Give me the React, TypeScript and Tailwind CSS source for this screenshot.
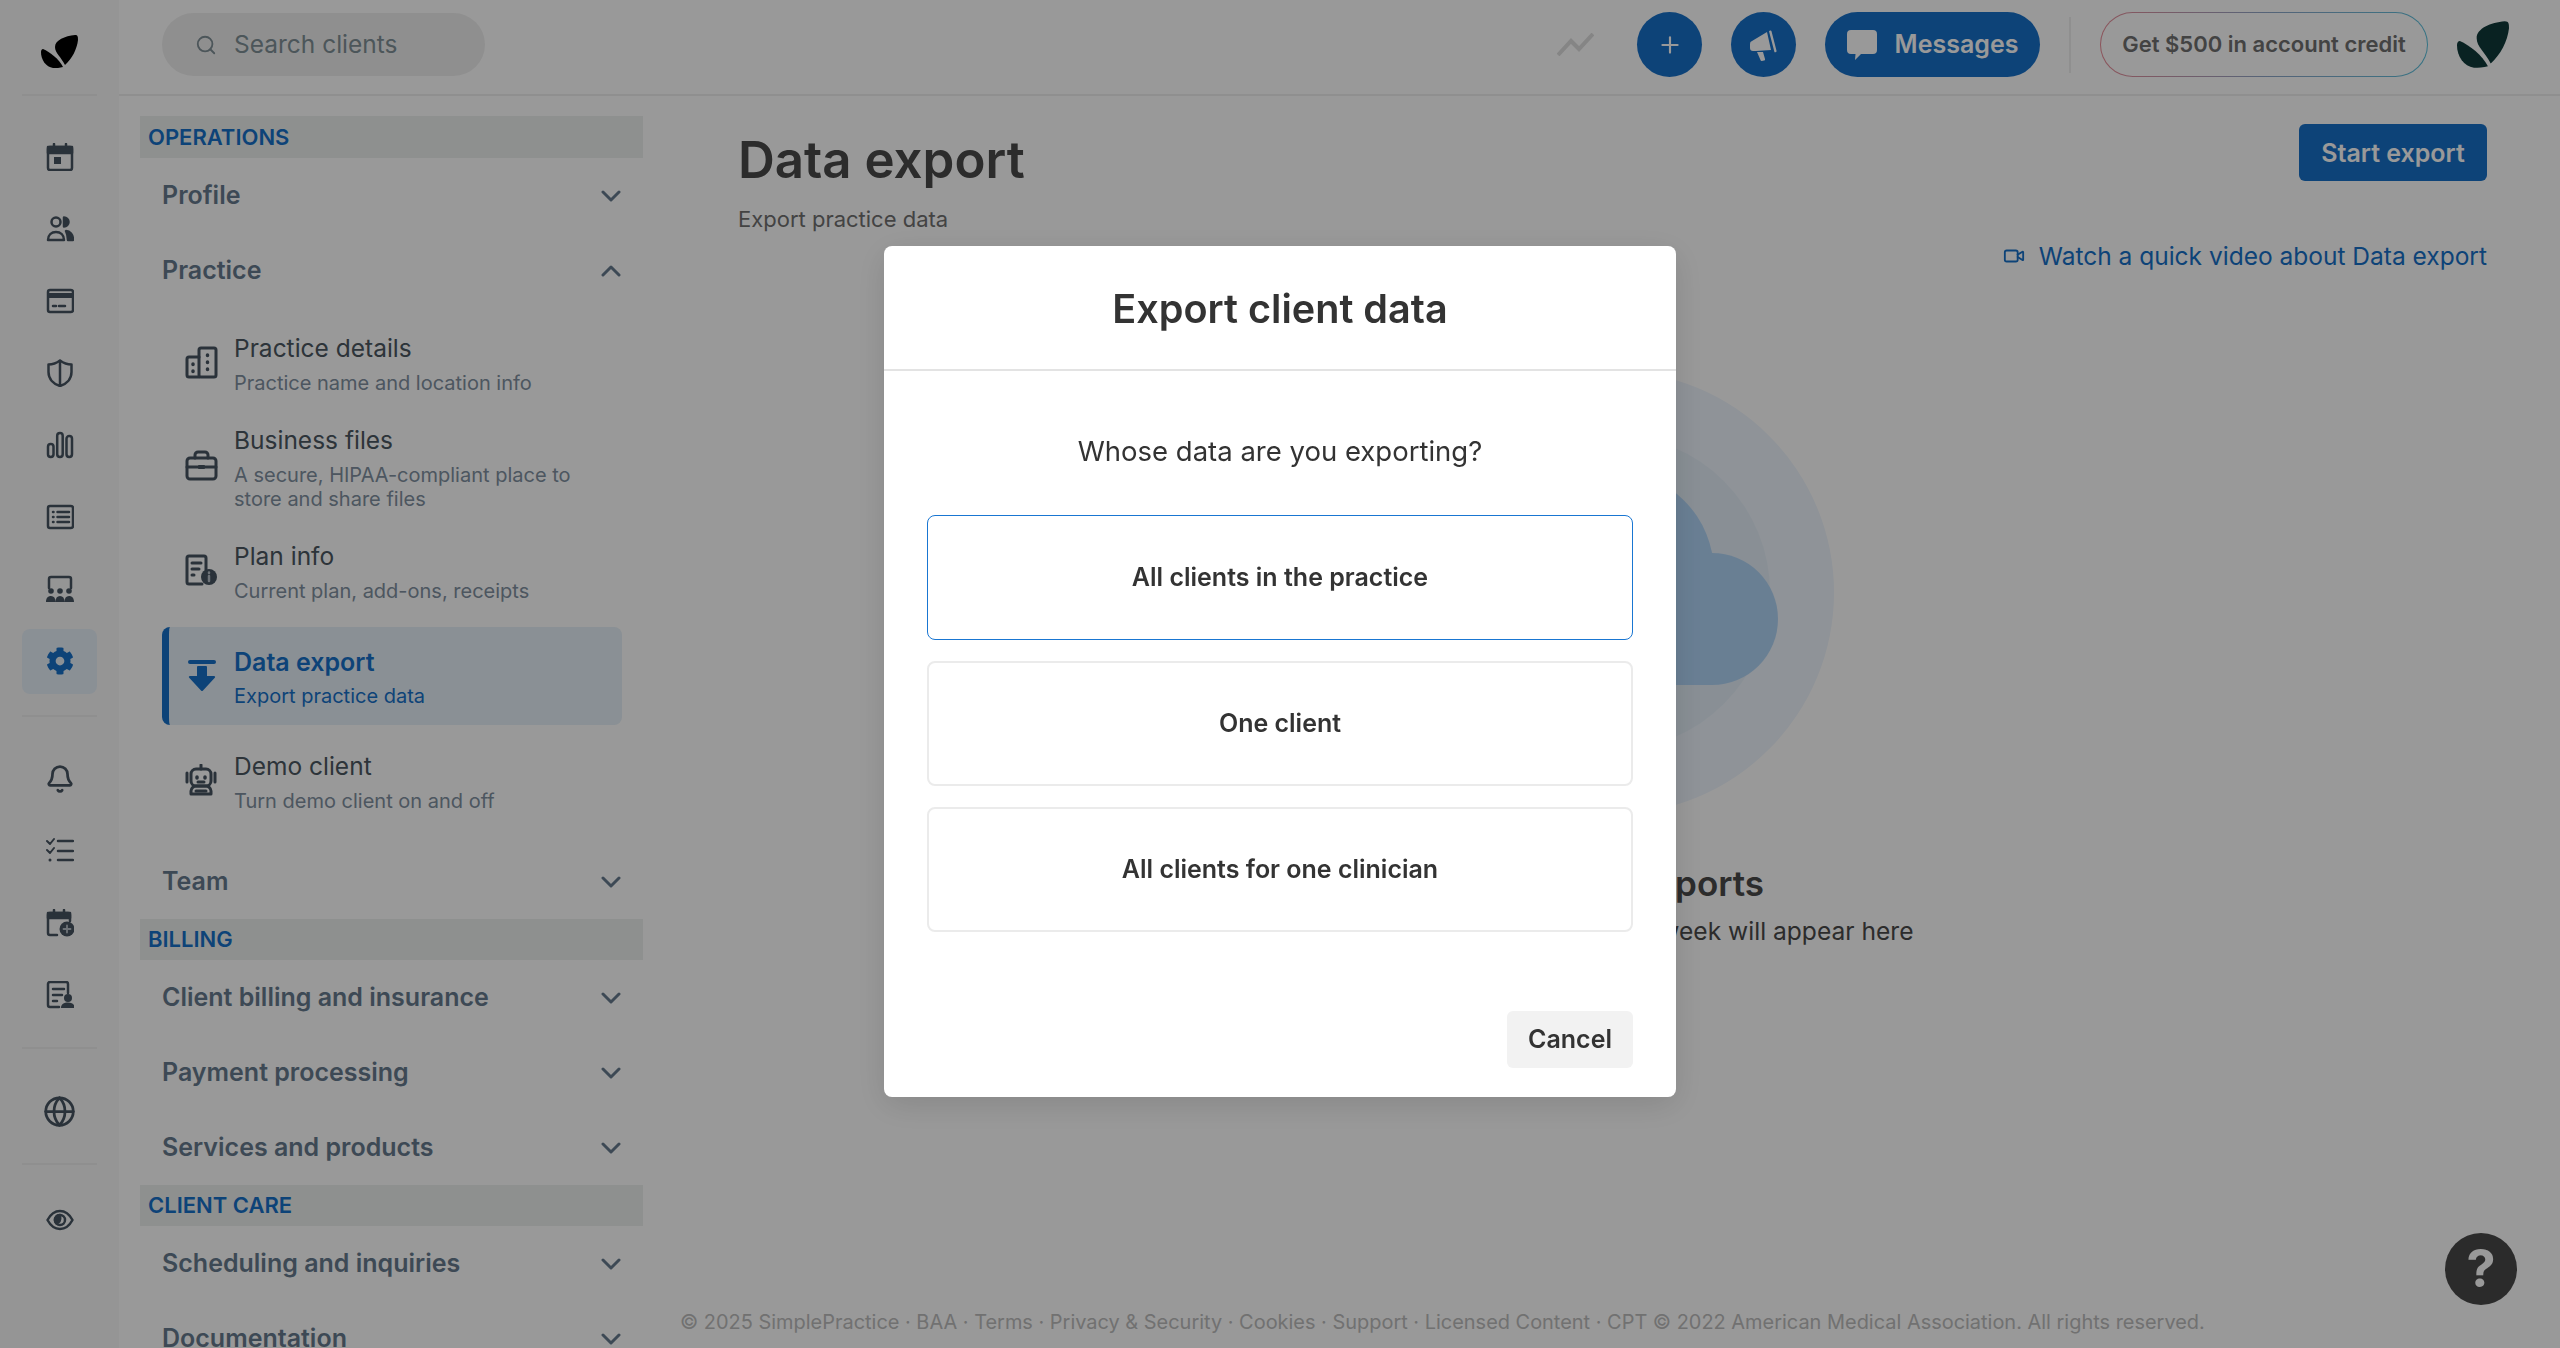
import type { ReactNode } from "react";
import { Bell, Globe, Plus, Search, Video } from "lucide-react";
import { FaCog } from "react-icons/fa";

const INK = "#465461";

function Leaf({ className, fill }: { className: string; fill: string }) {
  return (
    <svg viewBox="0 0 37 33" className={className} fill={fill}>
      <path d="M34 0C37 0 37 2 37 5 36 14 31 24 24 30 20 22 14 18 14 12 14 5 24 1 34 0z" />
      <path d="M2 14C9 17 18 24 22 32 19 33 15 33 12 33 5 32 0 25 0 17 0 15 1 14 2 14z" />
    </svg>
  );
}

function Chevron({ up }: { up?: boolean }) {
  return (
    <svg viewBox="0 0 20 12" className="h-[12px] w-[20px]" fill="none" stroke="#677b8e" strokeWidth="3" strokeLinecap="round" strokeLinejoin="round">
      <polyline points={up ? "2,10 10,2 18,10" : "2,2 10,10 18,2"} />
    </svg>
  );
}

function Ico({ children, w = 28, h = 28, sw = 2.5 }: { children: ReactNode; w?: number; h?: number; sw?: number }) {
  return (
    <svg width={w} height={h} viewBox={`0 0 ${w} ${h}`} fill="none" stroke={INK} strokeWidth={sw} strokeLinecap="round" strokeLinejoin="round">
      {children}
    </svg>
  );
}

const CalendarIcon = () => (
  <Ico>
    <rect x="2" y="4" width="24" height="23" rx="2" />
    <rect x="2" y="4" width="24" height="6" fill={INK} />
    <path d="M8 1v3M20 1v3" />
    <rect x="8" y="14" width="7" height="7" fill={INK} stroke="none" />
  </Ico>
);

const PeopleIcon = () => (
  <Ico>
    <circle cx="10" cy="7" r="4.500" />
    <path d="M18 2.500a4.500 4.500 0 0 1 0 9z" fill={INK} />
    <path d="M2 25c0-5 3.500-8 8-8s8 3 8 8z" />
    <path d="M20 16c4 0 7 3.500 7 9h-5c0-3-.5-6-2-9z" fill={INK} />
  </Ico>
);

const CardIcon = () => (
  <Ico>
    <rect x="2" y="3" width="25" height="22" rx="2" />
    <rect x="2" y="6" width="25" height="5" fill={INK} stroke="none" />
    <path d="M7 19h3M13 19h6" />
  </Ico>
);

const ShieldIcon = () => (
  <Ico>
    <path d="M14 1.500C10 4.500 6 5.500 2.500 5.500V13c0 7 5 12 11.500 14 6.500-2 11.500-7 11.500-14V5.500C22 5.500 18 4.500 14 1.500z" />
    <path d="M14 2v25" />
  </Ico>
);

const BarsIcon = () => (
  <Ico>
    <rect x="2" y="13" width="5.500" height="13" rx="2.700" />
    <rect x="11.200" y="2" width="5.500" height="24" rx="2.700" />
    <rect x="20.500" y="5" width="5.500" height="21" rx="2.700" />
  </Ico>
);

const ListBoxIcon = () => (
  <Ico>
    <rect x="2" y="3" width="25" height="22" rx="2" />
    <path d="M7 9h.5M7 14h.5M7 19h.5M11.500 9H23M11.500 14H23M11.500 19H23" />
  </Ico>
);

const RoomIcon = () => (
  <Ico>
    <path d="M3 13V4a2 2 0 0 1 2-2h18a2 2 0 0 1 2 2v9" />
    <g fill={INK} stroke="none">
      <circle cx="5" cy="16" r="2.800" />
      <circle cx="14" cy="16" r="2.800" />
      <circle cx="23" cy="16" r="2.800" />
      <path d="M0 27c0-4 2-6 5-6s4.500 2 4.500 6zM9.500 27c0-4 1.500-6 4.500-6s4.500 2 4.500 6zM18.500 27c0-4 1.500-6 4.500-6s5 2 5 6z" />
    </g>
  </Ico>
);

const TasksIcon = () => (
  <Ico>
    <path d="M1 4l3 3 4-5M1 13l3 3 4-5" strokeWidth="2" />
    <circle cx="4" cy="23" r="1.500" fill={INK} stroke="none" />
    <path d="M12 4h15M12 14h15M12 23h15" />
  </Ico>
);

const CalPlusIcon = () => (
  <Ico>
    <path d="M11 26H4a2 2 0 0 1-2-2V6a2 2 0 0 1 2-2h18a2 2 0 0 1 2 2v6" />
    <rect x="2" y="4" width="22" height="5" fill={INK} />
    <path d="M8 1v3M18 1v3" />
    <circle cx="21" cy="20" r="7.500" fill={INK} stroke="none" />
    <path d="M21 16.500v7M17.500 20h7" stroke="#b8c0c8" strokeWidth="1.800" />
  </Ico>
);

const DocPersonIcon = () => (
  <Ico>
    <path d="M13 26H4a2 2 0 0 1-2-2V3a2 2 0 0 1 2-2h16a2 2 0 0 1 2 2v9" />
    <path d="M7 8h11M7 14h9M7 20h4" />
    <circle cx="22" cy="17" r="4" fill={INK} stroke="none" />
    <path d="M15 27c0-4 3-5.500 7-5.500s6.500 1.500 6.500 5.500z" fill={INK} stroke="none" />
  </Ico>
);

const EyeIcon = () => (
  <Ico>
    <path d="M1.500 14C5 7.500 9 5 14 5s9 2.500 12.500 9C23 20.500 19 23 14 23S5 20.500 1.500 14z" />
    <circle cx="14" cy="14" r="5" />
    <path d="M14 9a5 5 0 0 0-4 8c3 0 5-2 4-8z" fill={INK} />
  </Ico>
);

const BuildingIcon = () => (
  <Ico w={33} h={33} sw={3}>
    <rect x="14" y="2" width="17" height="29" rx="2" />
    <path d="M14 11H4a2 2 0 0 0-2 2v16a2 2 0 0 0 2 2h10" />
    <path d="M22.500 9v.5M22.500 16v.5M22.500 23v.5M8 18v.5M8 25v.5" strokeWidth="3.500" />
  </Ico>
);

const BriefcaseIcon = () => (
  <Ico w={33} h={33} sw={3}>
    <rect x="2" y="8" width="29" height="21" rx="3" />
    <path d="M10 8V5a3 3 0 0 1 3-3h7a3 3 0 0 1 3 3v3M2 17h29" />
    <rect x="13" y="15" width="7" height="4" rx="1" fill={INK} stroke="none" />
  </Ico>
);

const PlanIcon = () => (
  <Ico w={33} h={33} sw={3}>
    <path d="M17 30H4a2 2 0 0 1-2-2V4a2 2 0 0 1 2-2h15a2 2 0 0 1 2 2v12" />
    <path d="M7 9h9M7 15h7M7 21h2" />
    <circle cx="24" cy="23" r="8" fill={INK} stroke="none" />
    <path d="M24 22v5M24 18.500v.5" stroke="#b8c0c8" strokeWidth="2.500" />
  </Ico>
);

const RobotIcon = () => (
  <Ico w={33} h={33} sw={3}>
    <path d="M16 1v4" />
    <rect x="6" y="5" width="20" height="17" rx="5" />
    <path d="M2 9v9M30 9v9" />
    <path d="M12 13v1M20 13v1" strokeWidth="3.500" />
    <path d="M13 18h6" />
    <path d="M6 33v-3c0-3 3-5 5-5h10c2 0 5 2 5 5v3z" transform="translate(0 -3)" />
    <path d="M11 27h10" />
  </Ico>
);

const ExportIcon = () => (
  <svg width="28" height="32" viewBox="0 0 28 32" fill="#1770c8">
    <rect x="0" y="0" width="28" height="4" rx="2" />
    <path d="M9 7a1 1 0 0 1 1-1h8a1 1 0 0 1 1 1v9h7c1 0 1.500 1 .8 1.700L15 30.500a1.400 1.400 0 0 1-2 0L1.200 17.700c-.7-.7-.2-1.700.8-1.700h7z" />
  </svg>
);

const MegaphoneIcon = () => (
  <svg width="30" height="32" viewBox="0 0 30 32" fill="#ffffff">
    <path d="M1 15a3 3 0 0 1 2-3L18 3l4 18-15 1-3 0a3 3 0 0 1-3-3z" />
    <path d="M8 23h6l2 7c.2 1-.3 1.500-1 1.600l-2 .4c-.8.1-1.300-.3-1.500-1z" />
    <path d="M21 1.500c.8-.3 1.300 0 1.500.8l5 19.500c.2.800-.2 1.300-1 1.400l-1 .1-5.500-21z" />
  </svg>
);

function RailItem({ children, active }: { children: ReactNode; active?: boolean }) {
  return (
    <div className="flex h-[72px] items-center justify-center">
      {active ? (
        <div className="flex h-[65px] w-[75px] items-center justify-center rounded-lg bg-[#e6f0f8]">{children}</div>
      ) : (
        children
      )}
    </div>
  );
}

function Rail() {
  return (
    <aside className="flex w-[119px] shrink-0 flex-col bg-[#f9f9f9]">
      <div className="mx-[22px] flex h-[96px] items-start justify-center border-b-2 border-[#eeeeee] pt-[35px]">
        <Leaf className="h-[33px] w-[37px]" fill="#000000" />
      </div>
      <div className="mt-[25px]">
        <RailItem><CalendarIcon /></RailItem>
        <RailItem><PeopleIcon /></RailItem>
        <RailItem><CardIcon /></RailItem>
        <RailItem><ShieldIcon /></RailItem>
        <RailItem><BarsIcon /></RailItem>
        <RailItem><ListBoxIcon /></RailItem>
        <RailItem><RoomIcon /></RailItem>
        <RailItem active><FaCog size={28} color="#1770c8" /></RailItem>
      </div>
      <div className="mx-[22px] mt-[18px] h-[2px] bg-[#eeeeee]" />
      <div className="mt-[26px]">
        <RailItem><Bell size={30} color={INK} strokeWidth={2.2} /></RailItem>
        <RailItem><TasksIcon /></RailItem>
        <RailItem><CalPlusIcon /></RailItem>
        <RailItem><DocPersonIcon /></RailItem>
      </div>
      <div className="mx-[22px] mt-[16px] h-[2px] bg-[#eeeeee]" />
      <div className="mt-[26px]">
        <RailItem><Globe size={33} color={INK} strokeWidth={2} /></RailItem>
      </div>
      <div className="mx-[22px] mt-[16px] h-[2px] bg-[#eeeeee]" />
      <div className="mt-[19px]">
        <RailItem><EyeIcon /></RailItem>
      </div>
    </aside>
  );
}

function SectionLabel({ children, tall }: { children: ReactNode; tall?: boolean }) {
  return (
    <div className={tall ? "flex h-[42px] items-center bg-[#edf1ef] pl-2 text-[22px] font-semibold text-[#1770c8]" : "flex h-[41px] items-center bg-[#edf1ef] pl-2 text-[22px] font-semibold text-[#1770c8]"}>
      {children}
    </div>
  );
}

function NavRow({ label, up }: { label: string; up?: boolean }) {
  return (
    <div className="mx-[22px] flex h-[75px] shrink-0 items-center justify-between text-[25px] font-semibold text-[#677b8e]">
      <span className="pt-px">{label}</span>
      <Chevron up={up} />
    </div>
  );
}

function SubItem({ icon, title, sub }: { icon: ReactNode; title: string; sub: string }) {
  return (
    <div className="flex pt-[10px] pb-[17px]">
      <div className="flex w-[72px] shrink-0 items-center justify-center pl-[7px]">{icon}</div>
      <div className="w-[370px]">
        <div className="text-[24.5px] leading-[36px] text-[#4b5761]">{title}</div>
        <div className="mt-[5px] text-[20px] leading-[24px] text-[#8090a0]">{sub}</div>
      </div>
    </div>
  );
}

function Sidebar() {
  return (
    <nav className="w-[541px] shrink-0 overflow-hidden pt-[20px] pl-[21px] pr-[17px]">
      <SectionLabel tall>OPERATIONS</SectionLabel>
      <NavRow label="Profile" />
      <NavRow label="Practice" up />
      <div className="mx-[22px] pt-[12px] pb-[14px]">
        <SubItem icon={<BuildingIcon />} title="Practice details" sub="Practice name and location info" />
        <SubItem icon={<BriefcaseIcon />} title="Business files" sub="A secure, HIPAA-compliant place to store and share files" />
        <SubItem icon={<PlanIcon />} title="Plan info" sub="Current plan, add-ons, receipts" />
        <div className="mt-[7px] mb-[13px] -mr-px flex rounded-lg border-l-[7px] border-[#1770c8] bg-[#e6f0f8] pt-[17px] pb-[17px]">
          <div className="flex w-[65px] shrink-0 items-center justify-center">
            <ExportIcon />
          </div>
          <div>
            <div className="text-[25px] leading-[36px] font-semibold text-[#1770c8]">Data export</div>
            <div className="mt-1 text-[20px] leading-[24px] text-[#1770c8]">Export practice data</div>
          </div>
        </div>
        <SubItem icon={<RobotIcon />} title="Demo client" sub="Turn demo client on and off" />
      </div>
      <NavRow label="Team" />
      <SectionLabel>BILLING</SectionLabel>
      <NavRow label="Client billing and insurance" />
      <NavRow label="Payment processing" />
      <NavRow label="Services and products" />
      <SectionLabel>CLIENT CARE</SectionLabel>
      <NavRow label="Scheduling and inquiries" />
      <NavRow label="Documentation" />
    </nav>
  );
}

function Topbar() {
  return (
    <header className="flex h-[96px] shrink-0 items-start justify-between border-b-2 border-[#eeeeee] pt-[12px] pl-[43px] pr-[51px]">
      <div className="mt-px flex h-[63px] w-[323px] items-center rounded-full bg-[#efefef] pl-[33px]">
        <Search size={22} color="#7f8f96" strokeWidth={2} />
        <span className="ml-[17px] text-[24.5px] text-[#7f8f96]">Search clients</span>
      </div>
      <div className="flex items-center gap-[29px]">
        <svg width="37" height="23" viewBox="0 0 37 23" fill="none" stroke="#dedede" strokeWidth="4" className="mr-[14px]">
          <path d="M1 22l13-14 8 8L36 1" />
        </svg>
        <div className="flex h-[65px] w-[65px] items-center justify-center rounded-full bg-[#1770c8]">
          <Plus size={26} color="#ffffff" strokeWidth={2} />
        </div>
        <div className="flex h-[65px] w-[65px] items-center justify-center rounded-full bg-[#1770c8]">
          <MegaphoneIcon />
        </div>
        <div className="flex h-[65px] w-[215px] items-center justify-center gap-[18px] rounded-full bg-[#1770c8] text-[25px] font-semibold text-white">
          <svg width="30" height="30" viewBox="0 0 30 30" fill="#ffffff">
            <path d="M4 0h22a4 4 0 0 1 4 4v16a4 4 0 0 1-4 4H14l-6 6 .5-6H4a4 4 0 0 1-4-4V4a4 4 0 0 1 4-4z" />
          </svg>
          Messages
        </div>
        <div className="h-[56px] w-[2px] bg-[#eeeeee]" />
        <div className="rounded-full bg-linear-to-r from-[#e98c98] via-[#8fa6c8] to-[#58bfdc] p-px">
          <div className="flex h-[63px] w-[326px] items-center justify-center rounded-full bg-white text-[22px] font-semibold text-[#707070]">
            Get $500 in account credit
          </div>
        </div>
        <Leaf className="h-[47px] w-[52px]" fill="#0f3a3a" />
      </div>
    </header>
  );
}

function EmptyArt() {
  return (
    <svg width="443" height="443" viewBox="0 0 443 443">
      <circle cx="221.500" cy="221.500" r="221.500" fill="#eef5fd" />
      <circle cx="221.500" cy="221.500" r="157.500" fill="#e4eff9" />
      <g fill="#b0d4f6">
        <circle cx="221.500" cy="201.500" r="101.500" />
        <circle cx="321" cy="248" r="66" />
        <circle cx="122" cy="248" r="66" />
        <rect x="122" y="214" width="199" height="100" />
      </g>
    </svg>
  );
}

function Main() {
  return (
    <main className="flex min-w-0 flex-1 flex-col">
      <div className="pt-[28px] pl-[78px] pr-[73px]">
        <div className="flex items-start justify-between">
          <div className="pt-[6px]">
            <h1 className="text-[51px] leading-[60px] font-semibold text-[#4a4a4a]">Data export</h1>
            <p className="mt-[14px] text-[22px] leading-[30px] text-[#707070]">Export practice data</p>
          </div>
          <div className="flex h-[57px] w-[188px] items-center justify-center rounded-md bg-[#1770c8] pt-[2px] text-[25px] font-semibold text-white">
            Start export
          </div>
        </div>
        <div className="mt-[7px] flex items-center justify-end gap-[14px] text-[24.500px] leading-[30px] text-[#1770c8]">
          <Video size={22} color="#1770c8" strokeWidth={2} />
          <span>Watch a quick video about Data export</span>
        </div>
        <div className="mt-[100px] flex flex-col items-center">
          <EmptyArt />
          <div className="mt-[47px] text-[35px] leading-[44px] font-semibold text-[#4a4a4a]">No recent exports</div>
          <div className="mt-[10px] text-[24.600px] leading-[32px] text-[#4a4a4a]">Exports requested in the past week will appear here</div>
        </div>
      </div>
      <footer className="mt-auto pb-[11px] pl-[20px] text-[19.950px] leading-[30px] text-[#bcbcbc]">
        © 2025 SimplePractice · BAA · Terms · Privacy &amp; Security · Cookies · Support · Licensed Content · CPT © 2022 American Medical Association. All rights reserved.
      </footer>
    </main>
  );
}

function OptionCard({ label, selected }: { label: string; selected?: boolean }) {
  return (
    <div
      className={
        selected
          ? "flex h-[125px] items-center justify-center rounded-lg border border-[#1976d2] pt-px text-[25px] font-semibold text-[#333333]"
          : "flex h-[125px] items-center justify-center rounded-lg border-2 border-[#ebebeb] pt-px text-[25px] font-semibold text-[#333333]"
      }
    >
      {label}
    </div>
  );
}

function ExportModal() {
  return (
    <div className="fixed inset-0 flex items-start justify-center bg-black/40 pt-[246px]">
      <div className="flex h-[851px] w-[792px] flex-col rounded-lg bg-white shadow-[0_8px_32px_rgba(0,0,0,0.12)]">
        <div className="flex h-[125px] items-center justify-center border-b-2 border-[#e3e3e3] pt-[5px] text-[39.600px] font-semibold text-[#333333]">
          Export client data
        </div>
        <div className="px-[43px] pt-[60px]">
          <p className="text-center text-[27.500px] leading-[40px] text-[#333333]">Whose data are you exporting?</p>
          <div className="mt-[44px] flex flex-col gap-[21px]">
            <OptionCard label="All clients in the practice" selected />
            <OptionCard label="One client" />
            <OptionCard label="All clients for one clinician" />
          </div>
          <div className="mt-[79px] flex justify-end">
            <div className="flex h-[57px] w-[126px] items-center justify-center rounded-md bg-[#f2f2f2] pt-px text-[25px] font-semibold text-[#333333]">
              Cancel
            </div>
          </div>
        </div>
      </div>
    </div>
  );
}

export default function App() {
  return (
    <div className="relative flex h-screen overflow-hidden bg-white font-['Inter',sans-serif]">
      <Rail />
      <div className="flex min-w-0 flex-1 flex-col">
        <Topbar />
        <div className="flex min-h-0 flex-1">
          <Sidebar />
          <Main />
        </div>
      </div>
      <div className="absolute right-[43px] bottom-[43px] flex h-[72px] w-[72px] items-center justify-center rounded-full bg-[#484848] text-[52px] font-bold text-white">
        ?
      </div>
      <ExportModal />
    </div>
  );
}
